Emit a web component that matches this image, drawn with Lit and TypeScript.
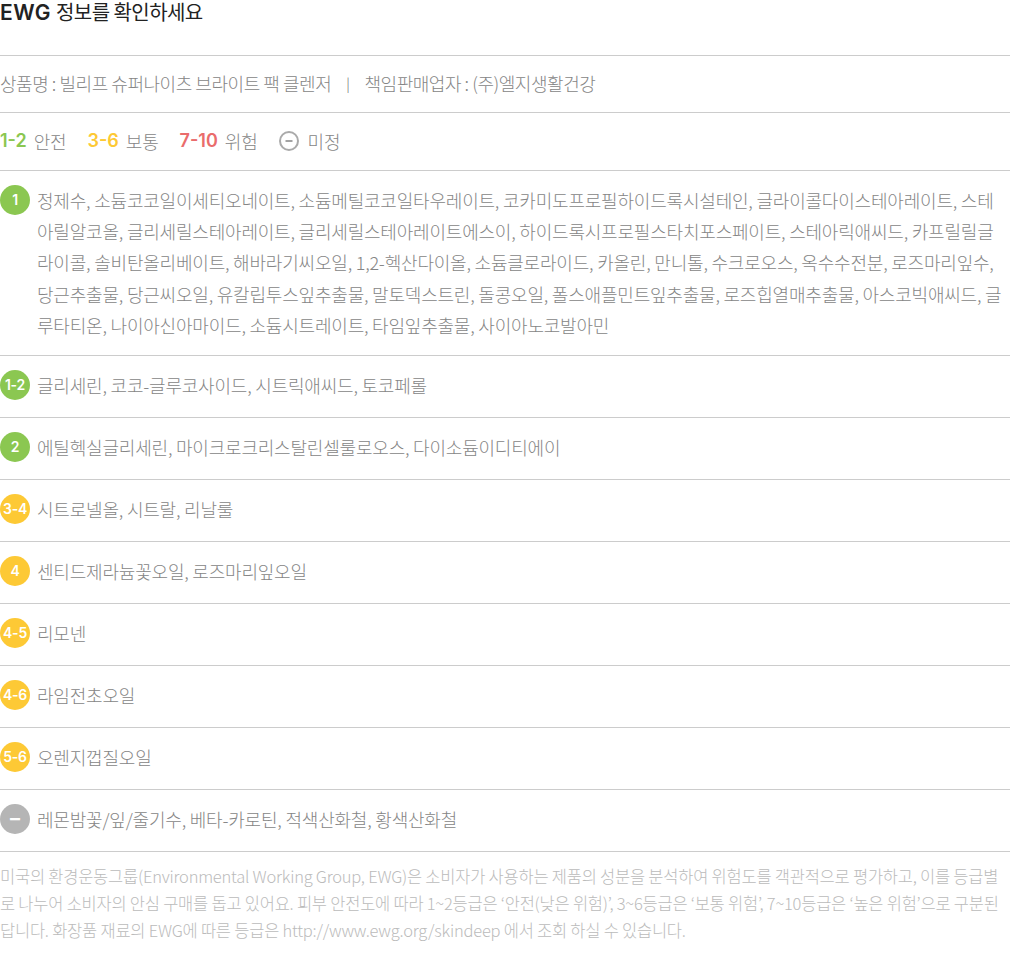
import { LitElement, html, css } from "lit";
import { customElement } from "lit/decorators.js";

const rows: [string, string, string][] = [
  ["1", "g", "정제수, 소듐코코일이세티오네이트, 소듐메틸코코일타우레이트, 코카미도프로필하이드록시설테인, 글라이콜다이스테아레이트, 스테아릴알코올, 글리세릴스테아레이트, 글리세릴스테아레이트에스이, 하이드록시프로필스타치포스페이트, 스테아릭애씨드, 카프릴릴글라이콜, 솔비탄올리베이트, 해바라기씨오일, 1,2-헥산다이올, 소듐클로라이드, 카올린, 만니톨, 수크로오스, 옥수수전분, 로즈마리잎수, 당근추출물, 당근씨오일, 유칼립투스잎추출물, 말토덱스트린, 돌콩오일, 폴스애플민트잎추출물, 로즈힙열매추출물, 아스코빅애씨드, 글루타티온, 나이아신아마이드, 소듐시트레이트, 타임잎추출물, 사이아노코발아민"],
  ["1-2", "g", "글리세린, 코코-글루코사이드, 시트릭애씨드, 토코페롤"],
  ["2", "g", "에틸헥실글리세린, 마이크로크리스탈린셀룰로오스, 다이소듐이디티에이"],
  ["3-4", "y", "시트로넬올, 시트랄, 리날룰"],
  ["4", "y", "센티드제라늄꽃오일, 로즈마리잎오일"],
  ["4-5", "y", "리모넨"],
  ["4-6", "y", "라임전초오일"],
  ["5-6", "y", "오렌지껍질오일"],
  ["–", "n", "레몬밤꽃/잎/줄기수, 베타-카로틴, 적색산화철, 황색산화철"],
];

@customElement("app-root")
export class AppRoot extends LitElement {
  static styles = css`
    :host {
      display: block;
      width: 1010px;
      font-family: "Noto Sans CJK KR", "Noto Sans", sans-serif;
      font-weight: 300;
      color: #858585;
      font-size: 18px;
      letter-spacing: -0.2px;
    }
    .title {
      height: 56px;
      box-sizing: border-box;
      font-size: 20px;
      font-weight: 400;
      color: #222;
      line-height: 24px;
      border-bottom: 1px solid #ccc;
      letter-spacing: -0.55px;
    }
    .title b { font-family: Inter, sans-serif; font-weight: 600; font-size: 21px; letter-spacing: 0.5px; margin-right: 1px; }
    .info {
      height: 57px;
      box-sizing: border-box;
      padding-bottom: 2px;
      display: flex;
      align-items: center;
      border-bottom: 1px solid #ccc;
      letter-spacing: -0.45px;
    }
    .sep { margin: 0 15px; font-size: 14px; color: #666; }
    .legend {
      height: 58px;
      box-sizing: border-box;
      padding-bottom: 2px;
      display: flex;
      align-items: center;
      border-bottom: 1px solid #ccc;
    }
    .legend .num {
      font-family: Inter, sans-serif;
      font-weight: 600;
      font-size: 18px;
      margin-right: 7px;
      letter-spacing: 0;
    }
    .legend .item { margin-right: 21px; display: flex; align-items: center; }
    .c-g { color: #8bc751; }
    .c-y { color: #fdc935; }
    .c-r { color: #ea6c6c; }
    .legend svg { margin-right: 9px; display: block; }
    .row {
      display: flex;
      gap: 7px;
      box-sizing: border-box;
      min-height: 62px;
      border-bottom: 1px solid #ccc;
      padding: 14px 5px 14px 0;
      line-height: 31.2px;
    }
    .badge {
      flex: none;
      width: 30px;
      height: 30px;
      border-radius: 50%;
      display: flex;
      align-items: center;
      justify-content: center;
      color: #fff;
      font-family: Inter, sans-serif;
      font-size: 14px;
      font-weight: 600;
      letter-spacing: -0.2px;
    }
    .bg-g { background: #8bc751; }
    .bg-y { background: #fdc935; }
    .bg-n { background: #b5b5b5; font-size: 20px; font-weight: 700; }
    .text { flex: 1; }
    .note {
      padding-top: 11px;
      font-size: 16.5px;
      line-height: 27px;
      color: #bbb;
      letter-spacing: -0.23px;
    }
  `;

  render() {
    return html`
      <div class="title"><b>EWG</b> 정보를 확인하세요</div>
      <div class="info">상품명 : 빌리프 슈퍼나이츠 브라이트 팩 클렌저<span class="sep">|</span>책임판매업자 : (주)엘지생활건강</div>
      <div class="legend">
        <span class="item"><span class="num c-g">1-2</span>안전</span>
        <span class="item"><span class="num c-y">3-6</span>보통</span>
        <span class="item"><span class="num c-r">7-10</span>위험</span>
        <span class="item">
          <svg width="20" height="20" viewBox="0 0 20 20"><circle cx="10" cy="10" r="9" fill="none" stroke="#aaa" stroke-width="2"/><path d="M6.5 10h7" stroke="#999" stroke-width="1.8"/></svg>미정
        </span>
      </div>
      ${rows.map(
        ([b, c, t]) => html`<div class="row"><span class="badge bg-${c}">${b}</span><div class="text">${t}</div></div>`
      )}
      <div class="note">미국의 환경운동그룹(Environmental Working Group, EWG)은 소비자가 사용하는 제품의 성분을 분석하여 위험도를 객관적으로 평가하고, 이를 등급별로 나누어 소비자의 안심 구매를 돕고 있어요. 피부 안전도에 따라 1~2등급은 ‘안전(낮은 위험)’, 3~6등급은 ‘보통 위험’, 7~10등급은 ‘높은 위험’으로 구분된답니다. 화장품 재료의 EWG에 따른 등급은 http://www.ewg.org/skindeep 에서 조회 하실 수 있습니다.</div>
    `;
  }
}
